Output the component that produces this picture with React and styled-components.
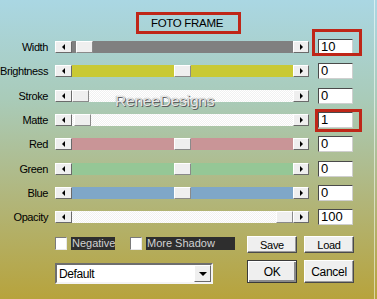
import React from 'react';
import styled, { createGlobalStyle } from 'styled-components';

const GlobalStyle = createGlobalStyle`
  html, body { margin: 0; padding: 0; }
  body { font-family: "Liberation Sans", Arial, sans-serif; color: #000; }
`;

const RED = '#bf2618';

const Dialog = styled.div`
  position: relative;
  width: 377px;
  height: 299px;
  box-sizing: border-box;
  padding-top: 12px;
  overflow: hidden;
  background: linear-gradient(180deg, #aad7e3 0%, #a9cbb9 33%, #b1b67c 66%, #b7a33c 100%);
  &::after {
    content: '';
    position: absolute;
    top: 0;
    bottom: 0;
    right: 2px;
    width: 1px;
    background: rgba(255, 255, 255, 0.55);
  }
`;

const TitleBox = styled.div`
  width: 105px;
  height: 22px;
  box-sizing: border-box;
  margin: 0 auto;
  border: 3px solid ${RED};
  display: flex;
  align-items: center;
  justify-content: center;
  font-size: 11.5px;
  letter-spacing: -0.3px;
  padding-right: 3px;
`;

const Rows = styled.div`
  margin-top: 1px;
  display: flex;
  flex-direction: column;
`;

const Row = styled.div`
  height: 24.3px;
  display: flex;
  align-items: center;
`;

const Label = styled.div`
  width: 48px;
  margin-right: 7px;
  text-align: right;
  font-size: 11px;
  letter-spacing: -0.4px;
  white-space: nowrap;
`;

const Slider = styled.div`
  display: flex;
  width: 254px;
  height: 12px;
`;

const ArrowButton = styled.div`
  width: ${p => p.$w}px;
  height: 12px;
  box-sizing: border-box;
  background: #efefef;
  border: 1px solid;
  border-color: #ffffff #6a6a6a #6a6a6a #ffffff;
  display: flex;
  align-items: center;
  justify-content: center;
  &::before {
    content: '';
    width: 0;
    height: 0;
    border-top: 3px solid transparent;
    border-bottom: 3px solid transparent;
    ${p => (p.$dir === 'left' ? 'border-right: 3px solid #000;' : 'border-left: 3px solid #000;')}
  }
`;

const Track = styled.div`
  position: relative;
  flex: 1;
  height: 12px;
  background: ${p =>
    p.$color
      ? p.$color
      : 'repeating-conic-gradient(#f1f1f1 0 25%, #ffffff 0 50%) 0 0 / 2px 2px'};
`;

const Thumb = styled.div`
  position: absolute;
  top: 0;
  width: 17px;
  height: 12px;
  box-sizing: border-box;
  background: #efefef;
  border: 1px solid;
  border-color: #ffffff #8a8a8a #8a8a8a #ffffff;
`;

const ValueBox = styled.div`
  position: relative;
  margin-left: 9px;
  width: 35px;
  height: 16px;
  box-sizing: border-box;
  background: #fff;
  border: 1px solid;
  border-color: #4a4a4a #cfcfcf #cfcfcf #4a4a4a;
  font-size: 13px;
  line-height: 14px;
  padding-left: 2px;
`;

const Marker = styled.div`
  position: absolute;
  top: ${p => p.$t}px;
  right: ${p => p.$r}px;
  bottom: ${p => p.$b}px;
  left: ${p => p.$l}px;
  border: 3px solid ${RED};
  pointer-events: none;
`;

const Watermark = styled.div`
  position: absolute;
  left: 115px;
  top: 92px;
  font-size: 15.5px;
  letter-spacing: -0.2px;
  color: #e6e6e6;
  text-shadow: 1px 1px 0 #5e5e5e, 0 0 1px #8a8a8a;
`;

const Footer = styled.div`
  display: flex;
  margin-top: 7px;
  padding-left: 55px;
`;

const Options = styled.div`
  width: 180px;
  display: flex;
  flex-direction: column;
`;

const CheckRow = styled.div`
  display: flex;
  align-items: center;
  height: 13px;
  margin-top: 1px;
`;

const CheckBox = styled.div`
  width: 12px;
  height: 13px;
  box-sizing: border-box;
  margin-left: ${p => p.$gap || 0}px;
  background: #fff;
  border: 1px solid;
  border-color: #7a7a7a #e8e8e8 #e8e8e8 #7a7a7a;
`;

const CheckLabel = styled.div`
  width: ${p => p.$w}px;
  height: 13px;
  margin-left: 4px;
  box-sizing: border-box;
  padding-left: 1px;
  background: #2e2e2e;
  color: #d2d2d2;
  font-size: 11px;
  line-height: 13px;
  white-space: nowrap;
`;

const Select = styled.div`
  margin-top: 13px;
  width: 158px;
  height: 21px;
  box-sizing: border-box;
  background: #fff;
  border: 2px solid;
  border-color: #6e6e6e #f4f4f4 #f4f4f4 #6e6e6e;
  display: flex;
  align-items: center;
  justify-content: space-between;
  font-size: 12px;
  letter-spacing: -0.4px;
  padding-left: 2px;
`;

const DropButton = styled.div`
  width: 17px;
  height: 17px;
  box-sizing: border-box;
  background: #efefef;
  border: 1px solid;
  border-color: #ffffff #6a6a6a #6a6a6a #ffffff;
  display: flex;
  align-items: center;
  justify-content: center;
  &::before {
    content: '';
    border-left: 4px solid transparent;
    border-right: 4px solid transparent;
    border-top: 4px solid #000;
  }
`;

const Buttons = styled.div`
  margin-left: 12px;
  display: grid;
  grid-template-columns: 50px 50px;
  grid-template-rows: 17px 23px;
  column-gap: 7px;
  row-gap: 7px;
`;

const Button = styled.div`
  box-sizing: border-box;
  background: #efefef;
  border: 1px solid;
  border-color: ${p => (p.$default ? '#3a3a3a' : '#ffffff #4a4a4a #4a4a4a #ffffff')};
  box-shadow: ${p =>
    p.$default
      ? 'inset 1px 1px 0 #ffffff, inset -2px -2px 0 #8a8a8a'
      : 'inset -1px -1px 0 #9a9a9a'};
  display: flex;
  align-items: center;
  justify-content: center;
  font-size: ${p => (p.$big ? 12 : 11)}px;
  letter-spacing: -0.3px;
`;

const controls = [
  { label: 'Width', color: '#808080', pos: 0.02, value: '10', mark: { t: -11, r: -10, b: -2, l: -7 } },
  { label: 'Brightness', color: '#c9c934', pos: 0.5, value: '0' },
  { label: 'Stroke', pos: 0, value: '0' },
  { label: 'Matte', pos: 0.01, value: '1', mark: { t: -4, r: -10, b: -5, l: -4 } },
  { label: 'Red', color: '#c99597', pos: 0.5, value: '0' },
  { label: 'Green', color: '#95c796', pos: 0.5, value: '0' },
  { label: 'Blue', color: '#7fa7c8', pos: 0.5, value: '0' },
  { label: 'Opacity', pos: 1, value: '100' },
];

const TRACK = 221;

const App = () => {
  return (
    <Dialog>
      <GlobalStyle />
      <TitleBox>FOTO FRAME</TitleBox>
      <Rows>
        {controls.map(c => (
          <Row key={c.label}>
            <Label>{c.label}</Label>
            <Slider>
              <ArrowButton $w={17} $dir="left" />
              <Track $color={c.color}>
                <Thumb style={{ left: Math.round(c.pos * (TRACK - 17)) }} />
              </Track>
              <ArrowButton $w={16} $dir="right" />
            </Slider>
            <ValueBox>
              {c.value}
              {c.mark && <Marker $t={c.mark.t} $r={c.mark.r} $b={c.mark.b} $l={c.mark.l} />}
            </ValueBox>
          </Row>
        ))}
      </Rows>
      <Watermark>ReneeDesigns</Watermark>
      <Footer>
        <Options>
          <CheckRow>
            <CheckBox />
            <CheckLabel $w={44}>Negative</CheckLabel>
            <CheckBox $gap={15} />
            <CheckLabel $w={89}>More Shadow</CheckLabel>
          </CheckRow>
          <Select>
            <span>Default</span>
            <DropButton />
          </Select>
        </Options>
        <Buttons>
          <Button>Save</Button>
          <Button>Load</Button>
          <Button $default $big>OK</Button>
          <Button $big>Cancel</Button>
        </Buttons>
      </Footer>
    </Dialog>
  );
};

export default App;
